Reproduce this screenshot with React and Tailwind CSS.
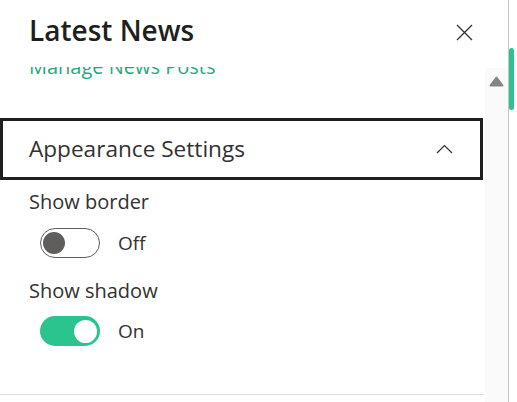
import React from 'react';

const font = { fontFamily: '"Open Sans", "Noto Sans", Arial, sans-serif' };

const Toggle = ({ on, label }) => (
  <div className="flex items-center">
    <div
      className={
        on
          ? 'ml-[11px] flex h-[30px] w-[60px] items-center justify-end rounded-full bg-[#2bc48f] pr-[3px]'
          : 'ml-[11px] flex h-[30px] w-[60px] items-center rounded-full border border-[#605e5c] bg-white pl-[2px]'
      }
    >
      <div className={on ? 'h-[23px] w-[23px] rounded-full bg-white' : 'h-[22px] w-[22px] rounded-full bg-[#605e5c]'} />
    </div>
    <span className="ml-[18px] text-[19px] leading-[28px] text-[#323130]">{label}</span>
  </div>
);

export default function App() {
  return (
    <div className="flex h-[402px] w-[517px] overflow-hidden bg-white" style={font}>
      <div className="flex w-[508px] flex-col">
        {/* header */}
        <div className="flex h-[67px] shrink-0 items-start justify-between pl-[29px] pr-[35px]">
          <h1 className="mt-[12px] text-[28px] font-semibold leading-[36px] text-[#201f1e]">Latest News</h1>
          <button className="mt-[24px] text-[#323130]">
            <svg width="17" height="17" viewBox="0 0 17 17" fill="none" stroke="currentColor" strokeWidth="1.3">
              <path d="M1 1 L16 16 M16 1 L1 16" />
            </svg>
          </button>
        </div>

        {/* scroll body */}
        <div className="flex min-h-0 flex-1">
          <div className="w-[485px] overflow-hidden">
            <div className="-mt-[12px] pl-[29px] text-[20px] leading-[24px] text-[#1fa97c]">Manage News Posts</div>

            <div className="mt-[39px] flex h-[62px] w-[483px] items-center justify-between border-[3px] border-[#201f1e] pl-[26px] pr-[27px]">
              <span className="text-[22.6px] leading-[30px] text-[#323130]">Appearance Settings</span>
              <svg width="17" height="10" viewBox="0 0 17 10" fill="none" stroke="#323130" strokeWidth="1.2">
                <path d="M1 9 L8.5 1.5 L16 9" />
              </svg>
            </div>

            <div className="pl-[29px]">
              <div className="mt-[8px] text-[20px] leading-[28px] text-[#323130]">Show border</div>
              <div className="mt-[12px]">
                <Toggle on={false} label="Off" />
              </div>
              <div className="mt-[19px] text-[20px] leading-[28px] text-[#323130]">Show shadow</div>
              <div className="mt-[11px]">
                <Toggle on label="On" />
              </div>
            </div>
            <div className="mt-[48px] w-[484px] border-t border-[#e1dfdd]" />
          </div>

          {/* inner scrollbar track */}
          <div className="mt-[1px] flex w-[23px] justify-start bg-[#fafafa] pl-[4px]">
            <svg className="mt-[8px]" width="15" height="11" viewBox="0 0 15 11">
              <path d="M7.5 1.5 L13.5 9.5 L1.5 9.5 Z" fill="#858585" strokeLinejoin="round" stroke="#858585" strokeWidth="2" />
            </svg>
          </div>
        </div>
      </div>

      <div className="w-px bg-[#c8c6c4]" />

      {/* outer scrollbar */}
      <div className="w-[8px]">
        <div className="mt-[48px] h-[62px] w-[5px] rounded-full bg-[#2bc48f]" />
      </div>
    </div>
  );
}
